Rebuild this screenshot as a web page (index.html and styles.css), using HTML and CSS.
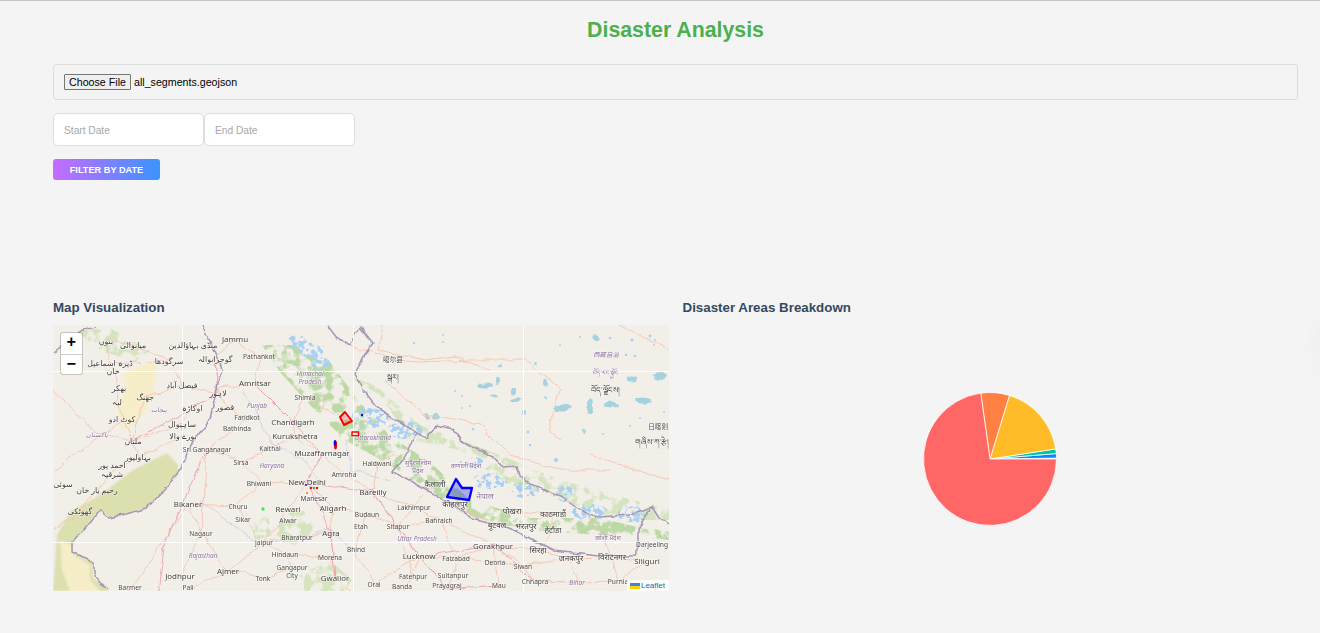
FILE: index.html
```html
<!DOCTYPE html>
<html lang="en">
<head>
<meta charset="utf-8">
<title>Disaster Analysis</title>
<link rel="stylesheet" href="styles.css">
</head>
<body>
<main class="page">
  <h1 class="title">Disaster Analysis</h1>
  <div class="file-box">
    <button class="file-btn" type="button">Choose File</button>
    <span class="file-name">all_segments.geojson</span>
  </div>
  <div class="dates">
    <input class="date" type="text" placeholder="Start Date">
    <input class="date" type="text" placeholder="End Date">
  </div>
  <button class="filter" type="button">FILTER BY DATE</button>
  <section class="panels">
    <div class="panel">
      <h3 class="panel-title">Map Visualization</h3>
      <div class="map">
        <svg class="map-svg" viewBox="53 325 616 266" width="616" height="266" xmlns="http://www.w3.org/2000/svg">
          <defs>
            <filter id="soft" x="-5%" y="-5%" width="110%" height="110%"><feGaussianBlur stdDeviation="0.8"/></filter>
            <filter id="patchy" x="-5%" y="-5%" width="110%" height="110%">
              <feTurbulence type="fractalNoise" baseFrequency="0.09" numOctaves="3" seed="4" result="n"/>
              <feColorMatrix in="n" type="matrix" values="0 0 0 0 0  0 0 0 0 0  0 0 0 0 0  0 0 0 7 -3.1" result="m"/>
              <feComposite in="SourceGraphic" in2="m" operator="in"/>
              <feGaussianBlur stdDeviation="0.5"/>
            </filter>
            <filter id="speck" x="-10%" y="-10%" width="120%" height="120%">
              <feTurbulence type="fractalNoise" baseFrequency="0.22" numOctaves="2" seed="9" result="n"/>
              <feColorMatrix in="n" type="matrix" values="0 0 0 0 0  0 0 0 0 0  0 0 0 0 0  0 0 0 9 -4.3" result="m"/>
              <feComposite in="SourceGraphic" in2="m" operator="in"/>
              <feGaussianBlur stdDeviation="0.35"/>
            </filter>
            <filter id="wiggle" x="-5%" y="-5%" width="110%" height="110%">
              <feTurbulence type="fractalNoise" baseFrequency="0.06" numOctaves="3" seed="2" result="n"/>
              <feDisplacementMap in="SourceGraphic" in2="n" scale="7" xChannelSelector="R" yChannelSelector="G"/>
              <feGaussianBlur stdDeviation="0.3"/>
            </filter>
          </defs>
          <rect class="land" x="53" y="325" width="616" height="266"/>
          <g filter="url(#soft)">
            <polygon class="sand" points="123,373 150,362 157,365 152,400 135,425 122,430 118,410 125,390"/>
            <polygon class="olive" points="167,453 133,470 100,495 70,512 57,535 53,591 108,591 108,588 93,578 93,562 73,552 73,542 100,510 110,518 147,508 178,475 178,465"/>
            <polygon class="sand" points="60,540 72,545 75,556 90,565 90,580 100,591 70,591 62,570"/>
          </g>
          <g filter="url(#patchy)">
            <polygon class="green2" points="262,345 295,345 330,362 358,400 390,436 430,462 470,500 530,518 600,518 650,530 669,528 669,540 600,535 530,530 465,515 430,490 385,462 345,440 310,405 280,372"/>
            <polygon class="green" points="345,375 380,395 410,440 460,450 500,480 560,500 620,520 669,520 669,510 560,480 500,455 420,425 375,385"/>
            <polygon class="green" points="75,330 110,328 150,350 135,362 100,350"/>
            <polygon class="green" points="280,520 300,505 315,530 295,545 275,540"/>
            <polygon class="green" points="300,575 330,560 352,580 345,591 305,591"/>
            <polygon class="green" points="250,525 268,515 272,535 255,540"/>
          </g>
          <g class="ice" filter="url(#speck)">
            <ellipse cx="297" cy="342" rx="10" ry="7"/><ellipse cx="312" cy="350" rx="13" ry="8"/><ellipse cx="320" cy="363" rx="10" ry="6"/>
            <ellipse cx="370" cy="418" rx="20" ry="10"/><ellipse cx="405" cy="430" rx="18" ry="9"/>
            <ellipse cx="490" cy="481" rx="18" ry="8"/><ellipse cx="525" cy="490" rx="14" ry="8"/><ellipse cx="565" cy="494" rx="10" ry="8"/>
            <ellipse cx="590" cy="512" rx="18" ry="8"/><ellipse cx="632" cy="514" rx="14" ry="9"/><ellipse cx="475" cy="463" rx="10" ry="6"/>
          </g>
          <g class="ice">
            <circle cx="294" cy="338" r="1.5"/><circle cx="300" cy="345" r="2"/><circle cx="313" cy="352" r="2.4"/><circle cx="320" cy="362" r="2"/>
            <circle cx="363" cy="410" r="2.2"/><circle cx="378" cy="418" r="2"/><circle cx="398" cy="428" r="2"/><circle cx="556" cy="460" r="2"/>
            <circle cx="530" cy="488" r="2.2"/><circle cx="635" cy="514" r="2.6"/><circle cx="600" cy="514" r="2"/>
          </g>
          <g class="lake" filter="url(#wiggle)">
            <ellipse cx="562" cy="408" rx="10" ry="3.5"/><ellipse cx="591" cy="405" rx="3" ry="8"/><ellipse cx="612" cy="405" rx="8" ry="2.5"/>
            <ellipse cx="643" cy="400" rx="8" ry="2.5"/><ellipse cx="633" cy="380" rx="5" ry="2.5"/><ellipse cx="660" cy="376" rx="8" ry="4"/>
            <ellipse cx="516" cy="400" rx="6" ry="2"/><ellipse cx="514" cy="392" rx="2" ry="4"/><ellipse cx="485" cy="386" rx="7" ry="2.5"/>
            <ellipse cx="497" cy="381" rx="2" ry="4"/><ellipse cx="436" cy="417" rx="4" ry="3"/><ellipse cx="428" cy="416" rx="2" ry="3"/>
            <ellipse cx="595" cy="337" rx="2.5" ry="3"/><ellipse cx="585" cy="431" rx="2" ry="3"/><ellipse cx="495" cy="396" rx="3" ry="1.5"/>
            <ellipse cx="545" cy="397" rx="2" ry="1.5"/><ellipse cx="545" cy="383" rx="2" ry="4"/><ellipse cx="537" cy="363" rx="2" ry="1"/>
            <ellipse cx="500" cy="366" rx="2" ry="1.5"/><ellipse cx="522" cy="413" rx="2" ry="2"/>
          </g>
          <g class="dots">
            <circle cx="470" cy="406" r="1"/><circle cx="462" cy="408" r="1"/><circle cx="473" cy="429" r="1.3"/><circle cx="528" cy="432" r="1.4"/>
            <circle cx="530" cy="445" r="1.3"/><circle cx="443" cy="335" r="1"/><circle cx="443" cy="342" r="1"/><circle cx="632" cy="340" r="1.4"/>
            <circle cx="650" cy="336" r="1.4"/><circle cx="655" cy="340" r="1"/><circle cx="610" cy="338" r="1.3"/><circle cx="635" cy="356" r="1.3"/>
            <circle cx="626" cy="355" r="1.3"/><circle cx="560" cy="345" r="1"/><circle cx="580" cy="337" r="1"/><circle cx="414" cy="343" r="1.2"/>
            <circle cx="455" cy="391" r="1"/><circle cx="462" cy="396" r="1"/><circle cx="640" cy="418" r="1"/><circle cx="630" cy="426" r="1"/>
            <circle cx="664" cy="412" r="1"/><circle cx="603" cy="434" r="1"/><circle cx="654" cy="345" r="1"/>
          </g>
          <g class="road" filter="url(#wiggle)">
            <polyline points="235,340 259,358 255,384 218,388 225,407 247,417 237,428 207,449 201,533 180,576"/>
            <polyline points="255,384 293,422 295,436 322,453 307,482 288,509 264,542 228,571 188,590"/>
            <polyline points="307,482 333,508 331,533 335,578 352,591"/>
            <polyline points="293,422 305,397 340,416"/>
            <polyline points="322,453 344,474 373,492 414,507 439,520 493,546 495,562 523,566 535,581"/>
            <polyline points="373,492 377,463 395,455"/>
            <polyline points="333,508 367,514 398,526 419,556 413,576 402,591"/>
            <polyline points="419,556 456,558 493,546 538,550 571,558 612,557 647,561"/>
            <polyline points="419,556 447,590"/>
            <polyline points="456,558 453,575 447,590"/>
            <polyline points="495,562 499,586"/>
            <polyline points="207,449 241,462 270,448 295,436"/>
            <polyline points="241,462 259,483 307,482"/>
            <polyline points="188,504 238,506 259,483"/>
            <polyline points="188,504 201,533 228,571"/>
            <polyline points="238,506 243,519 264,542 297,537 331,533"/>
            <polyline points="264,542 285,554 330,557 335,578"/>
            <polyline points="285,554 292,568 263,578 228,571"/>
            <polyline points="138,457 112,471 97,490 80,511 53,530"/>
            <polyline points="138,457 133,441 182,424 192,408 218,393 182,385 169,361 110,364 106,341"/>
            <polyline points="218,393 215,359 235,340"/>
            <polyline points="169,361 133,345 106,341"/>
            <polyline points="133,441 122,419 117,402 119,388 110,364"/>
            <polyline points="182,385 145,397 133,441"/>
            <polyline points="182,424 183,436 138,457"/>
            <polyline points="350,345 395,360 420,362 470,360 525,360 560,388 548,430 560,440"/>
            <polyline points="383,325 378,350 425,360 455,356 490,372"/>
            <polyline points="385,380 425,415 480,425 510,455 560,470 610,470"/>
            <polyline points="497,525 512,511 553,514 553,530 538,550"/>
            <polyline points="455,504 497,525 526,526 553,514"/>
            <polyline points="435,484 414,507 398,526"/>
            <polyline points="620,325 660,345 669,350"/>
            <polyline points="590,455 640,470 669,480"/>
            <polyline points="585,510 612,557"/>
            <polyline points="419,556 374,584"/>
            <polyline points="535,581 577,582 618,581 647,561"/>
            <polyline points="130,591 188,504"/>
            <polyline points="53,470 90,445 122,419"/>
            <polyline points="53,390 97,433 133,441"/>
            <polyline points="367,514 361,529 356,552 374,584"/>
            <polyline points="398,526 439,520 456,558 495,562"/>
            <polyline points="373,492 398,526 413,576"/>
            <polyline points="571,558 577,582 535,581"/>
            <polyline points="612,557 618,581"/>
            <polyline points="493,546 523,566 571,558"/>
          </g>
          <g class="rail" filter="url(#wiggle)">
            <polyline points="207,449 165,541 158,591"/>
            <polyline points="322,453 307,482 331,533 335,578"/>
            <polyline points="255,384 293,422 322,453"/>
            <polyline points="307,482 373,492 419,556 493,546 535,581"/>
            <polyline points="215,359 218,393 133,441"/>
            <polyline points="419,556 447,590 499,586"/>
          </g>
          <g class="state" filter="url(#wiggle)">
            <polyline points="243,391 270,440 300,460 320,478"/>
            <polyline points="345,440 352,470 390,480"/>
            <polyline points="200,500 260,545 330,530 352,550"/>
          </g>
          <g class="border" filter="url(#wiggle)">
            <polyline points="53,352 85,328 95,325"/>
            <polyline points="202,325 212,345 222,368 216,392 210,420 190,445 178,475 147,508 110,518 100,510 73,542 73,552 93,562 93,578 108,588"/>
            <polyline points="327,325 337,338 350,345 360,327 373,343 363,357 355,375 363,390 377,407 397,420 417,433 428,438 435,426 453,430 460,440 477,448 493,455 503,468 517,467 523,482 543,488 563,498 577,508 600,517 627,515 653,507 660,518 669,525"/>
            <polyline points="417,433 403,458 393,472 437,495 473,518 510,528 553,550 600,555 637,555 637,528 653,507"/>
          </g>
          <g class="seams">
            <rect x="182" y="325" width="1" height="266"/><rect x="353" y="325" width="1" height="266"/><rect x="523" y="325" width="1" height="266"/>
            <rect x="53" y="371" width="616" height="1"/><rect x="53" y="542" width="616" height="1"/>
          </g>
          <g class="lbl ur">
            <text x="106" y="344">بنوں</text><text x="133" y="348">میانوالی</text><text x="193" y="348">منڈی بہاؤالدین</text><text x="215" y="362">گوجرانوالہ</text>
            <text x="169" y="364">سرگودھا</text><text x="110" y="366">ڈیرہ اسماعیل</text><text x="113" y="374">خان</text><text x="182" y="388">فیصل آباد</text><text x="119" y="391">بھکر</text>
            <text x="145" y="400">جھنگ</text><text x="218" y="396">لاہور</text><text x="225" y="410">قصور</text><text x="192" y="411">اوکاڑہ</text><text x="117" y="405">لیہ</text>
            <text x="122" y="422">کوٹ ادو</text><text x="182" y="427">ساہیوال</text><text x="183" y="439">بورے والا</text><text x="133" y="444">ملتان</text>
            <text x="138" y="460">بہاولپور</text><text x="112" y="468">احمد پور</text><text x="112" y="477">شرقیہ</text><text x="97" y="493">رحیم یار خان</text><text x="63" y="487">سوئی</text><text x="80" y="514">گھوٹکی</text>
          </g>
          <g class="lbl">
            <text x="259" y="359">Pathankot</text><text x="247" y="420">Faridkot</text><text x="237" y="431">Bathinda</text><text x="305" y="400">Shimla</text>
            <text x="207" y="452">Sri Ganganagar</text><text x="270" y="451">Kaithal</text><text x="241" y="465">Sirsa</text><text x="259" y="486">Bhiwani</text>
            <text x="344" y="477">Amroha</text><text x="238" y="509">Churu</text><text x="314" y="501">Manesar</text><text x="243" y="522">Sikar</text><text x="288" y="523">Alwar</text>
            <text x="201" y="536">Nagaur</text><text x="297" y="540">Bharatpur</text><text x="264" y="545">Jaipur</text><text x="285" y="557">Hindaun</text><text x="330" y="560">Morena</text>
            <text x="292" y="570">Gangapur</text><text x="292" y="578">City</text><text x="263" y="581">Tonk</text><text x="130" y="590">Barmer</text><text x="188" y="590">Pali</text>
            <text x="377" y="466">Haldwani</text><text x="414" y="510">Lakhimpur</text><text x="367" y="517">Budaun</text><text x="439" y="523">Bahraich</text><text x="398" y="529">Sitapur</text>
            <text x="456" y="561">Faizabad</text><text x="495" y="565">Deoria</text><text x="523" y="569">Siwan</text><text x="413" y="579">Fatehpur</text><text x="453" y="578">Sultanpur</text>
            <text x="535" y="584">Chhapra</text><text x="618" y="584">Purnia</text><text x="499" y="588">Mau</text><text x="374" y="587">Orai</text><text x="402" y="589">Banda</text><text x="447" y="588">Prayagraj</text>
            <text class="end" x="668" y="547">Darjeeling</text><text x="361" y="529">Etah</text><text x="356" y="552">Bhind</text>
            <text x="393" y="362">噶尔县</text><text class="end" x="668" y="429">日喀则</text>
          </g>
          <g class="lbl dev">
            <text x="435" y="487">कैलाली</text><text x="455" y="507">कोहलपुर</text><text x="512" y="514">पोखरा</text><text x="553" y="517">काठमाडौं</text><text x="553" y="533">हेटौडा</text>
            <text x="497" y="528">बुटवल</text><text x="526" y="529">भरतपुर</text><text x="538" y="553">सिरहा</text><text x="571" y="561">जनकपुर</text><text x="612" y="560">विराटनगर</text>
            <text x="393" y="380">སྒར།</text><text x="605" y="393">བོད་ལྗོངས།</text><text x="652" y="445">གཞིས་ཀ་རྩེ།</text>
          </g>
          <g class="lbl big">
            <text x="235" y="342">Jammu</text><text x="255" y="386">Amritsar</text><text x="293" y="425">Chandigarh</text><text x="295" y="439">Kurukshetra</text>
            <text x="322" y="456">Muzaffarnagar</text><text x="307" y="485">New Delhi</text><text x="188" y="507">Bikaner</text><text x="288" y="512">Rewari</text><text x="333" y="511">Aligarh</text>
            <text x="331" y="536">Agra</text><text x="228" y="574">Ajmer</text><text x="180" y="579">Jodhpur</text><text x="335" y="581">Gwalior</text><text x="373" y="495">Bareilly</text>
            <text x="493" y="549">Gorakhpur</text><text x="419" y="559">Lucknow</text><text x="647" y="564">Siliguri</text>
          </g>
          <g class="lbl region">
            <text x="310" y="376">Himachal</text><text x="310" y="384">Pradesh</text><text x="257" y="408">Punjab</text><text x="272" y="468">Haryana</text><text x="203" y="558">Rajasthan</text>
            <text x="373" y="440">Uttarakhand</text><text x="417" y="541">Uttar Pradesh</text><text x="577" y="585">Bihar</text><text x="606" y="357">西藏自治</text>
            <text x="159" y="412">پنجاب</text><text x="97" y="437">پاکستان</text>
            <text x="418" y="465">सुदूरपश्चिम</text><text x="418" y="473">प्रदेश</text><text x="466" y="468">कर्णाली प्रदेश</text><text class="np" x="485" y="499">नेपाल</text><text x="608" y="540">कोशी प्रदेश</text>
            <text x="605" y="375">བོད་རང་སྐྱོང</text>
          </g>
          <polygon class="zone red" points="345,412 352,421 344,425 340,417"/>
          <rect class="zone red thin" x="352" y="432" width="6.5" height="3.6"/>
          <g class="spots">
            <ellipse class="s-red" cx="335.5" cy="445" rx="1.6" ry="4.5"/>
            <ellipse class="s-blue" cx="335" cy="443" rx="1.4" ry="3"/>
            <circle class="s-blue" cx="362" cy="415" r="1.2"/>
            <circle class="s-yellow" cx="340" cy="436" r="1"/>
            <circle class="s-red" cx="311" cy="488" r="1.2"/><circle class="s-green" cx="314" cy="488" r="1.2"/><circle class="s-red" cx="317" cy="488" r="1.2"/>
            <circle class="s-blue" cx="306" cy="485" r="1"/><circle class="s-orange" cx="307" cy="493" r="1"/>
            <circle class="s-lime" cx="263" cy="509" r="1.7"/>
          </g>
          <polygon class="zone blue" points="456,479 462,488 472,488 469,500 447,497"/>
        </svg>
        <div class="zoom">
          <span class="zoom-btn">+</span>
          <span class="zoom-btn">−</span>
        </div>
        <div class="attribution">
          <svg class="flag" width="10" height="6" viewBox="0 0 10 6" xmlns="http://www.w3.org/2000/svg"><rect class="flag-b" width="10" height="3"/><rect class="flag-y" y="3" width="10" height="3"/></svg>
          <span class="leaflet">Leaflet</span>
        </div>
      </div>
    </div>
    <div class="panel">
      <h3 class="panel-title">Disaster Areas Breakdown</h3>
      <div class="chart">
        <svg class="pie" width="136" height="136" viewBox="-67.5 -67.5 135 135" xmlns="http://www.w3.org/2000/svg">
          <path class="p-blue" d="M0 0L66 -0.9A66 66 0 0 0 65.8 -5.4Z"/>
          <path class="p-green" d="M0 0L65.8 -5.4A66 66 0 0 0 65.2 -10Z"/>
          <path class="p-yellow" d="M0 0L65.2 -10A66 66 0 0 0 19.3 -63.1Z"/>
          <path class="p-orange" d="M0 0L19.3 -63.1A66 66 0 0 0 -9.2 -65.4Z"/>
          <path class="p-red" d="M0 0L-9.2 -65.4A66 66 0 1 0 66 0Z"/>
        </svg>
      </div>
    </div>
  </section>
</main>
<div class="edge-glow"></div>
</body>
</html>
```
FILE: styles.css
```css
* { box-sizing: border-box; }
html, body { margin: 0; height: 633px; overflow: hidden; }
body {
  background: #f4f4f4;
  border-top: 1px solid #c6c6c6;
  font-family: "Liberation Sans", Arial, sans-serif;
  position: relative;
}
.page { padding: 0 22px 0 53px; }
.title {
  margin: 0;
  padding-top: 17px;
  height: 63px;
  text-align: center;
  font-size: 21.3px;
  line-height: 25px;
  font-weight: 700;
  color: #4caf50;
}
.file-box {
  display: flex;
  align-items: center;
  height: 36px;
  padding: 0 10px;
  border: 1px solid #dcdcdc;
  border-radius: 4px;
}
.file-btn {
  width: 67px;
  height: 16px;
  padding: 0;
  font: 10.67px "Liberation Sans", Arial, sans-serif;
  color: #000;
  background: #efefef;
  border: 1px solid #767676;
  border-radius: 1px;
}
.file-name { margin-left: 3px; font-size: 10.67px; color: #000; }
.dates { display: flex; margin-top: 13px; }
.date {
  width: 151px;
  height: 33px;
  padding: 2px 10px 0;
  font: 10.2px "Liberation Sans", Arial, sans-serif;
  background: #fff;
  border: 1px solid #dedede;
  border-radius: 5px;
}
.date::placeholder { color: #a8a8a8; opacity: 1; }
.filter {
  display: block;
  width: 107px;
  height: 21px;
  margin-top: 13px;
  padding: 0;
  border: 0;
  border-radius: 3px;
  color: #fff;
  font: 700 9.2px "Liberation Sans", Arial, sans-serif;
  background: linear-gradient(90deg, #c66cff, #3a94ff);
}
.panels {
  display: grid;
  grid-template-columns: 616px 1fr;
  column-gap: 13.5px;
  margin-top: 120px;
}
.panel-title {
  margin: 0 0 9px;
  height: 16px;
  font-size: 13.33px;
  line-height: 16px;
  font-weight: 700;
  color: #34495e;
}
.map { position: relative; width: 616px; height: 266px; overflow: hidden; }
.map-svg { display: block; }
.land { fill: #f2efe9; }
.sand { fill: #f6edc9; }
.olive { fill: #dcdfae; }
.green { fill: #d5e4bf; }
.green2 { fill: #bcd8a4; }
.ice, .dots { fill: #a8d0f6; }
.lake { fill: #a6d2e0; }
.road, .rail, .border, .state { fill: none; stroke-linejoin: round; }
.road { stroke: #f6c3ae; stroke-width: 0.9; }
.rail { stroke: #ee9fb3; stroke-width: 0.9; }
.state { stroke: #d3c6da; stroke-width: 0.8; }
.border { stroke: #a596b4; stroke-width: 1.5; }
.seams { fill: #fff; }
.lbl {
  font-family: "Noto Sans", "DejaVu Sans", "Noto Sans CJK SC", sans-serif;
  font-size: 6.6px;
  fill: #4a4845;
  text-anchor: middle;
  paint-order: stroke;
  stroke: rgba(255, 255, 255, 0.6);
  stroke-width: 1.2px;
  filter: blur(0.25px);
}
.end { text-anchor: end; }
.ur { font-size: 7.8px; fill: #3e3c39; }
.dev { font-size: 8px; fill: #3e3c39; }
.big { font-size: 7.9px; fill: #44423f; }
.region { font-size: 6.4px; font-style: italic; fill: #8d6f9d; }
.np { font-size: 8.5px; }
.zone { stroke-width: 2; stroke-linejoin: round; }
.red { fill: rgba(255, 0, 0, 0.2); stroke: #ff0000; }
.thin { fill: rgba(255, 255, 255, 0.5); stroke-width: 1.4; }
.blue { fill: rgba(0, 0, 255, 0.28); stroke: #0000ff; stroke-width: 2.3; }
.s-red { fill: #f00; }
.s-blue { fill: #00f; }
.s-yellow { fill: #f5e13c; }
.s-green { fill: #4caf50; }
.s-orange { fill: #e8701a; }
.s-lime { fill: #3ff04a; }
.zoom {
  position: absolute;
  left: 8px;
  top: 8px;
  width: 20.5px;
  display: flex;
  flex-direction: column;
  background: #fff;
  border-radius: 2px;
  box-shadow: 0 0 0 1px rgba(0, 0, 0, 0.18);
}
.zoom-btn {
  height: 20.5px;
  text-align: center;
  font: 700 16px/21px "Liberation Mono", monospace;
  color: #000;
}
.zoom-btn + .zoom-btn { border-top: 1px solid #ccc; }
.attribution {
  position: absolute;
  right: 0;
  bottom: 0;
  height: 11px;
  padding: 0 4px 0 3px;
  display: flex;
  align-items: center;
  gap: 1px;
  background: rgba(255, 255, 255, 0.8);
}
.flag { display: block; }
.flag-b { fill: #4c7be1; }
.flag-y { fill: #ffd500; }
.leaflet { font-size: 8px; line-height: 11px; color: #0078a8; }
.chart { display: flex; justify-content: center; padding: 65.5px 1px 0 0; }
.pie { display: block; }
.pie path { stroke: #fff; stroke-width: 0.8; }
.p-blue { fill: #0088fe; }
.p-green { fill: #00c49f; }
.p-yellow { fill: #ffbb28; }
.p-orange { fill: #ff8042; }
.p-red { fill: #ff6666; }
.edge-glow {
  position: absolute;
  right: -22px;
  top: 312px;
  width: 32px;
  height: 64px;
  border-radius: 50%;
  background: #f1f1f1;
  filter: blur(3px);
}
```
